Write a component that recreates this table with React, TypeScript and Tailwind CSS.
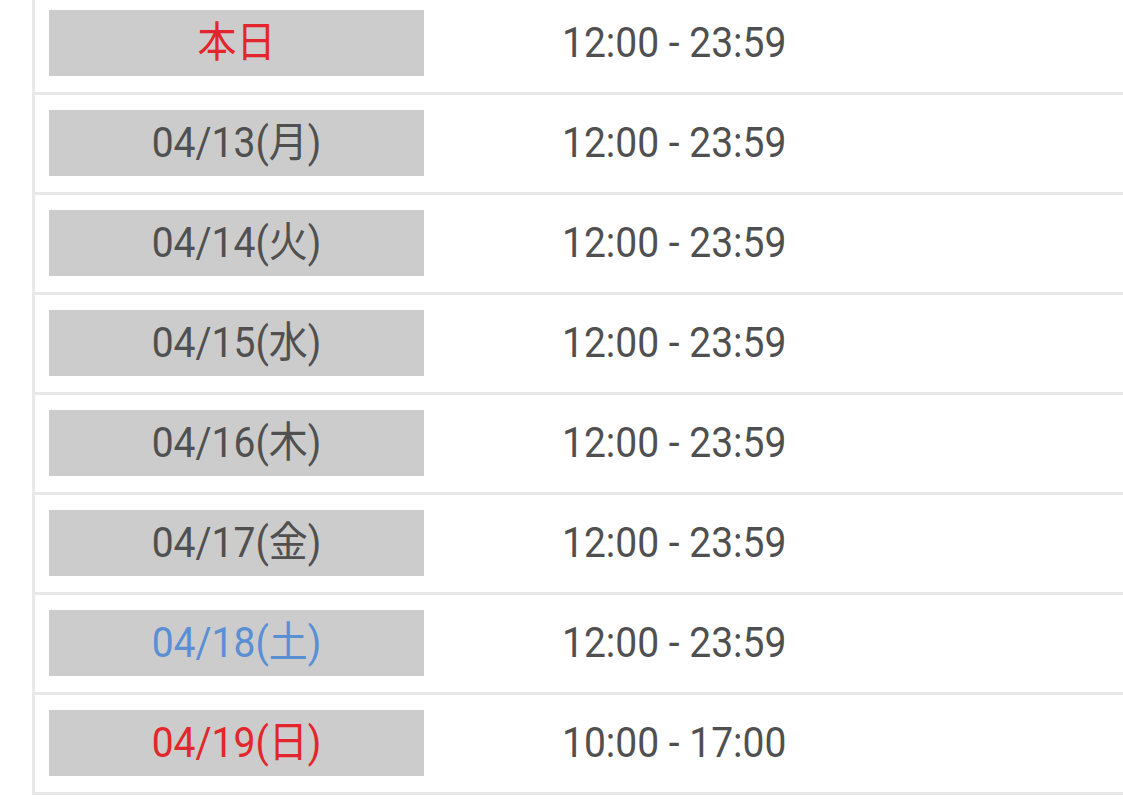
import React from "react";

type Row = { label: string; color: string; time: string };

const rows: Row[] = [
  { label: "本日", color: "text-[#e2262b]", time: "12:00 - 23:59" },
  { label: "04/13(月)", color: "text-[#505050]", time: "12:00 - 23:59" },
  { label: "04/14(火)", color: "text-[#505050]", time: "12:00 - 23:59" },
  { label: "04/15(水)", color: "text-[#505050]", time: "12:00 - 23:59" },
  { label: "04/16(木)", color: "text-[#505050]", time: "12:00 - 23:59" },
  { label: "04/17(金)", color: "text-[#505050]", time: "12:00 - 23:59" },
  { label: "04/18(土)", color: "text-[#5b8fd4]", time: "12:00 - 23:59" },
  { label: "04/19(日)", color: "text-[#e2262b]", time: "10:00 - 17:00" },
];

export default function App() {
  return (
    <div
      className="h-[800px] w-[1123px] overflow-hidden bg-white"
      style={{ fontFamily: 'Roboto, "Noto Sans CJK JP", sans-serif' }}
    >
      <div className="ml-[32px] h-full border-l-[3px] border-[#e8e8e8]">
        <div className="-mt-[5px]">
          {rows.map((r) => (
            <div
              key={r.label}
              className="flex items-center border-b-[3px] border-[#e8e8e8] pb-[16px] pl-[14px] pt-[15px]"
            >
              <div
                className={`flex h-[66px] w-[375px] items-center justify-center bg-[#cccccc] text-[39px] leading-none ${r.color}`}
              >
                <span className="inline-block scale-y-[1.08]">{r.label}</span>
              </div>
              <div className="ml-[138px] text-[39px] leading-none text-[#505050]">
                <span className="inline-block scale-y-[1.08]">{r.time}</span>
              </div>
            </div>
          ))}
        </div>
      </div>
    </div>
  );
}
